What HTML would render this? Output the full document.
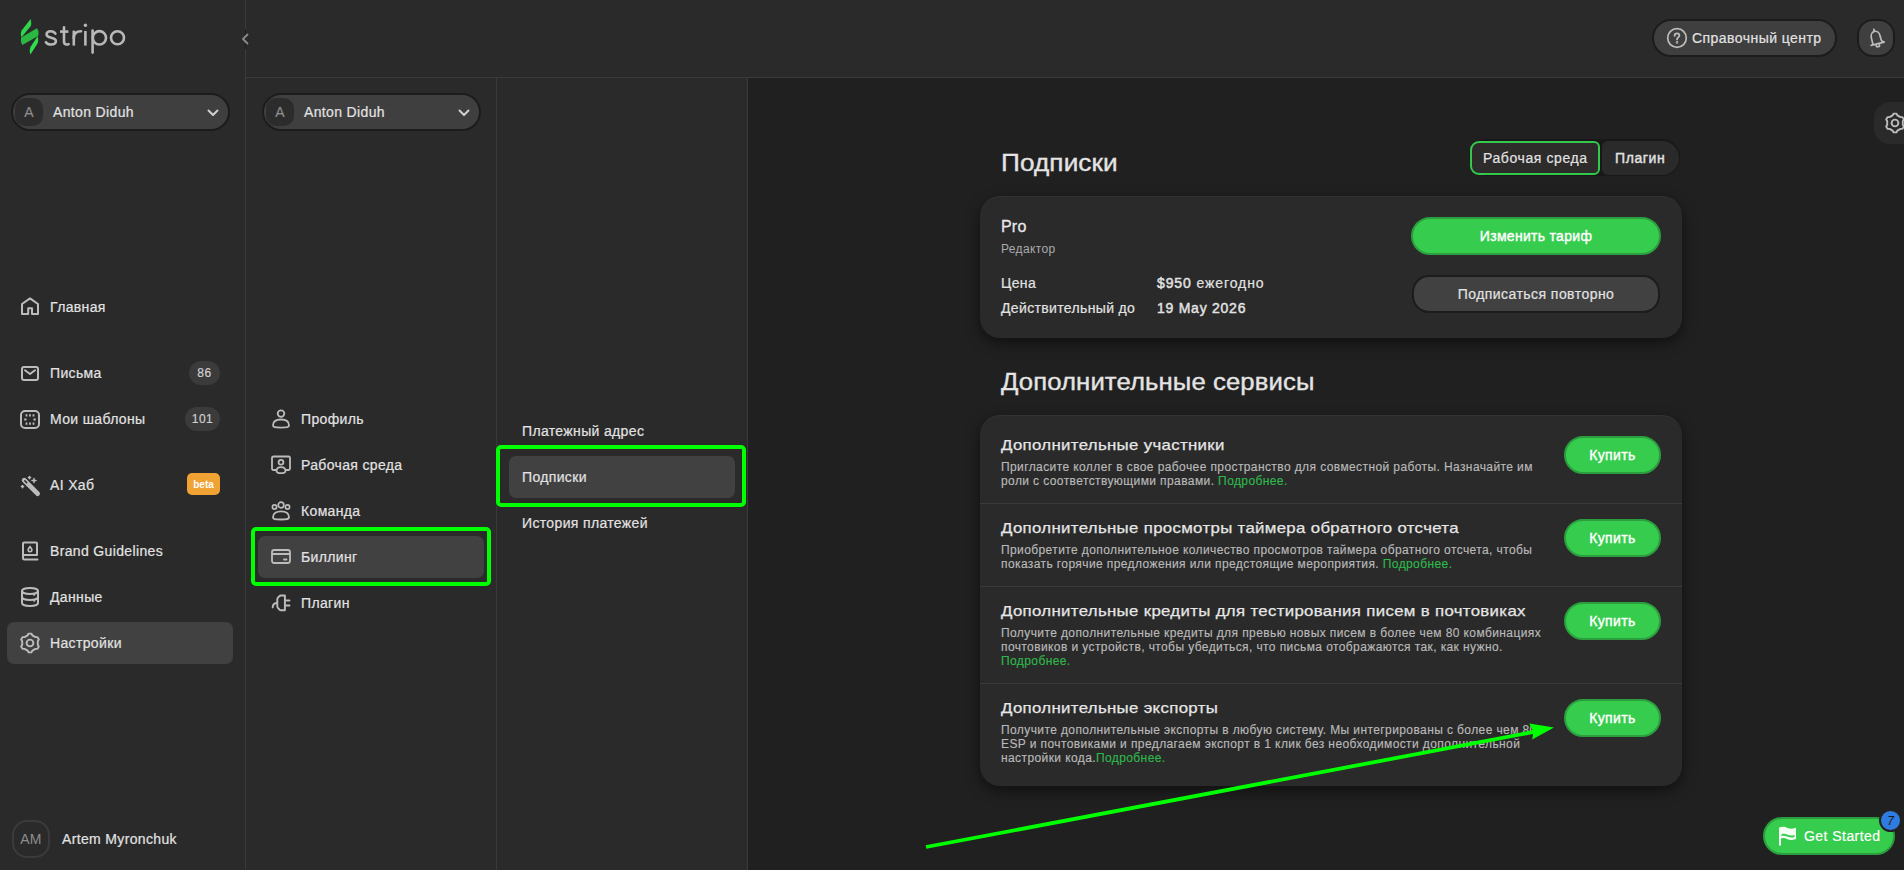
<!DOCTYPE html>
<html><head><meta charset="utf-8">
<style>
*{box-sizing:border-box;margin:0;padding:0}
html,body{width:1904px;height:870px;overflow:hidden;background:#202020;font-family:"Liberation Sans",sans-serif;color:#e2e2e2}
.a{position:absolute;white-space:nowrap}
.panel{position:absolute;background:#2a2a2a}
.vl{position:absolute;width:1px;background:#3a3a3a}
.hl{position:absolute;height:1px;background:#3a3a3a}
.t14{font-size:14px;line-height:14px;letter-spacing:0.35px;color:#e2e2e2;-webkit-text-stroke:0.2px #e2e2e2}
.ic{position:absolute;fill:none;stroke:#bcbcbc;stroke-width:2;stroke-linecap:round;stroke-linejoin:round}
.dd{position:absolute;top:93px;width:219px;height:38px;border:2px solid #1c1c1c;border-radius:19px;background:#3f3f3f}
.dd .av{position:absolute;left:2px;top:3px;width:28px;height:28px;border-radius:10px;background:#2c2c2c;color:#8c8c8c;font-size:14px;line-height:29px;text-align:center;-webkit-text-stroke:0.2px #8c8c8c}
.hi{position:absolute;background:#414141;border-radius:7px}
.badge{position:absolute;height:24px;border-radius:12px;background:#3b3b3b;color:#cfcfcf;font-size:12px;line-height:24px;text-align:center;letter-spacing:0.5px;-webkit-text-stroke:0.2px #cfcfcf}
.gbox{position:absolute;border:4px solid #00ff00;border-radius:5px}

.card{position:absolute;left:980px;width:702px;background:#2a2a2a;border-radius:20px;box-shadow:0 5px 14px rgba(0,0,0,0.5), inset 0 1px 0 rgba(255,255,255,0.04)}
.h24{font-size:24px;line-height:24px;letter-spacing:0.1px;color:#e4e4e4;-webkit-text-stroke:0.35px #e4e4e4;transform-origin:0 0}
.it{font-size:15px;line-height:15px;letter-spacing:0.3px;color:#e6e6e6;-webkit-text-stroke:0.25px #e6e6e6;transform:scaleX(1.12);transform-origin:0 0}
.ds{font-size:12px;line-height:14px;letter-spacing:0.4px;color:#b9b9b9;-webkit-text-stroke:0.15px #b9b9b9}
.ds b{font-weight:normal;color:#2eb84b;-webkit-text-stroke:0.15px #2eb84b}
.gbtn{position:absolute;background:#36cc4e;border:2px solid #2b9f3e;border-radius:19px;color:#fff;font-size:14px;text-align:center;letter-spacing:0.4px;-webkit-text-stroke:0.4px #fff}
.buy{left:1564px;width:97px;height:38px;line-height:34px}
.dv{position:absolute;left:980px;width:702px;height:1px;background:#3a3a3a}
</style></head><body>

<!-- left sidebar -->
<div class="panel" style="left:0;top:0;width:245px;height:870px"></div>
<div class="vl" style="left:245px;top:0;height:29px"></div>
<div class="vl" style="left:245px;top:49px;height:821px"></div>
<!-- header -->
<div class="panel" style="left:246px;top:0;width:1658px;height:77px"></div>
<div class="hl" style="left:246px;top:77px;width:1658px"></div>
<!-- col2/col3 -->
<div class="panel" style="left:246px;top:78px;width:250px;height:792px"></div>
<div class="vl" style="left:496px;top:78px;height:792px"></div>
<div class="panel" style="left:497px;top:78px;width:250px;height:792px"></div>
<div class="vl" style="left:747px;top:78px;height:792px"></div>


<!-- logo -->
<svg class="a" style="left:0;top:0" width="140" height="60" viewBox="0 0 140 60">
 <path d="M30.6,19 C31.4,21.5 31.4,24.5 30.8,26 L21.6,37.3 C20.6,35 20.6,32.5 21.6,30.6 Z" fill="#2fd64b"/>
 <path d="M21.2,37.4 L36.8,28.2 C38.6,29.6 39,33.2 38.1,36 L22.4,45 C20.9,43.2 20.6,40 21.2,37.4 Z" fill="#2ab843"/>
 <path d="M37.6,36.2 C38.6,39.5 38.3,42 37.2,44 L30.4,54.6 C29.4,52 29.6,48.5 30.8,46.4 Z" fill="#31df4e"/>
 <g fill="none" stroke="#b8b8b8" stroke-width="2.6" stroke-linecap="round">
  <path d="M55.4,33.6 C54.4,31.9 52.7,31.2 50.7,31.2 C48.1,31.2 46.6,32.6 46.6,34.5 C46.6,38.9 55.9,36.4 55.9,41 C55.9,43.2 53.8,44.5 51,44.5 C48.7,44.5 46.9,43.6 45.9,42.2"/>
  <path d="M64,27.4 V41.3 C64,43.4 65,44.5 66.8,44.5 C67.4,44.5 68,44.4 68.6,44.1" />
  <path d="M60,31.6 H68.4" stroke-linecap="butt"/>
  <path d="M73.8,30.6 V45.6" stroke-linecap="butt"/>
  <path d="M73.8,38 C73.8,33.2 76.4,31.2 81,31.2" />
  <path d="M85.4,31 V45.6" stroke-linecap="butt"/>
  <path d="M92.6,30.6 V52.6"/>
  <ellipse cx="99.4" cy="37.8" rx="6.6" ry="6.7"/>
  <circle cx="117.5" cy="37.8" r="6.5"/>
 </g>
 <circle cx="85.4" cy="25.3" r="1.7" fill="#b8b8b8"/>
</svg>
<!-- collapse chevron -->
<svg class="a" style="left:238px;top:30px" width="14" height="18" viewBox="0 0 14 18"><path d="M9.5,4.5 L5,9 L9.5,13.5" fill="none" stroke="#8a8a8a" stroke-width="1.8" stroke-linecap="round" stroke-linejoin="round"/></svg>

<!-- dropdown 1 -->
<div class="dd" style="left:11px"><div class="av">A</div></div>
<div class="a t14" style="left:53px;top:105px">Anton Diduh</div>
<svg class="a" style="left:200px;top:105px" width="24" height="16" viewBox="0 0 24 16"><path d="M8.5,5.5 L13,10 L17.5,5.5" fill="none" stroke="#cfcfcf" stroke-width="2" stroke-linecap="round" stroke-linejoin="round"/></svg>

<!-- nav -->
<div class="a t14" style="left:50px;top:300px">Главная</div>
<div class="a t14" style="left:50px;top:366px">Письма</div>
<div class="badge" style="left:189px;top:361px;width:31px">86</div>
<div class="a t14" style="left:50px;top:412px">Мои шаблоны</div>
<div class="badge" style="left:185px;top:407px;width:35px">101</div>
<div class="a t14" style="left:50px;top:478px">AI Хаб</div>
<div class="a" style="left:187px;top:473px;width:33px;height:22px;border-radius:5px;background:#f0a233;color:#fff;font-size:10px;font-weight:bold;line-height:23px;text-align:center">beta</div>
<div class="a t14" style="left:50px;top:544px">Brand Guidelines</div>
<div class="a t14" style="left:50px;top:590px">Данные</div>
<div class="hi" style="left:7px;top:622px;width:226px;height:42px"></div>
<div class="a t14" style="left:50px;top:636px">Настройки</div>

<!-- icons left -->
<svg class="ic" style="left:18px;top:295px" width="24" height="24" viewBox="0 0 24 24"><path d="M4,18.9 V9 L12,3.4 L20,9 V18.9 H14 V13.3 H10.2 V18.9 Z" stroke-width="2"/></svg>
<svg class="ic" style="left:18px;top:362px" width="24" height="24" viewBox="0 0 24 24"><rect x="4" y="5" width="16" height="13" rx="2"/><path d="M7,8.3 L12,12 L17,8.3"/></svg>
<svg class="ic" style="left:18px;top:407px" width="24" height="24" viewBox="0 0 24 24"><rect x="3" y="4" width="18" height="17" rx="4"/><g stroke-width="2.3" stroke-linecap="butt"><path d="M7.6,8.3h1.8M11.1,8.3h1.8M14.6,8.3h1.8M7.6,16.7h1.8M11.1,16.7h1.8M14.6,16.7h1.8M7.4,11.6v1.8M16.6,11.6v1.8"/></g></svg>
<svg class="ic" style="left:18px;top:473px" width="24" height="24" viewBox="0 0 24 24"><path d="M6.2,7.2 L19.6,20.6" stroke-width="4.8"/><path d="M6.8,7.8 L8.6,9.6" stroke="#2a2a2a" stroke-width="1.5"/><path d="M11.5,3.5 v2.2 M10.4,4.6 h2.2 M16,5.5 v4 M14,7.5 h4 M4.5,12.5 v2.2 M3.4,13.6 h2.2" stroke-width="1.5"/></svg>
<svg class="ic" style="left:18px;top:539px" width="24" height="24" viewBox="0 0 24 24"><path d="M5,19 V4.5 Q5,3.5 6,3.5 H18 Q19,3.5 19,4.5 V16 H6.5 Q5,16 5,17.5 V19 Q5,20.5 6.5,20.5 H19.5"/><path d="M12,7.5 L13.8,10.2 Q14.3,12.6 12,12.6 Q9.7,12.6 10.2,10.2 Z" stroke-width="1.6"/></svg>
<svg class="ic" style="left:18px;top:585px" width="24" height="24" viewBox="0 0 24 24"><ellipse cx="12" cy="6" rx="8" ry="3"/><path d="M4,6 V18 C4,19.7 7.6,21 12,21 C16.4,21 20,19.7 20,18 V6"/><path d="M4,12 C4,13.7 7.6,15 12,15 C16.4,15 20,13.7 20,12"/><path d="M16,9.8h.5M16,15.8h.5" stroke-width="1.8"/></svg>
<svg class="ic" style="left:18px;top:631px" width="24" height="24" viewBox="0 0 24 24"><path d="M9.66,4.35 L10.68,2.59 L13.32,2.59 L14.34,4.35 L17.46,6.15 L19.49,6.15 L20.81,8.44 L19.79,10.20 L19.79,13.80 L20.81,15.56 L19.49,17.85 L17.46,17.85 L14.34,19.65 L13.32,21.41 L10.68,21.41 L9.66,19.65 L6.54,17.85 L4.51,17.85 L3.19,15.56 L4.21,13.80 L4.21,10.20 L3.19,8.44 L4.51,6.15 L6.54,6.15 Z" stroke-width="1.9"/><circle cx="12" cy="12" r="3.4" stroke-width="1.9"/></svg>

<!-- bottom user -->
<div class="a" style="left:12px;top:820px;width:38px;height:38px;border:2px solid #3b3b3b;border-radius:15px;color:#8d8d8d;font-size:14px;line-height:34px;text-align:center;letter-spacing:0.2px">AM</div>
<div class="a t14" style="left:62px;top:832px">Artem Myronchuk</div>


<!-- dropdown 2 -->
<div class="dd" style="left:262px"><div class="av">A</div></div>
<div class="a t14" style="left:304px;top:105px">Anton Diduh</div>
<svg class="a" style="left:451px;top:105px" width="24" height="16" viewBox="0 0 24 16"><path d="M8.5,5.5 L13,10 L17.5,5.5" fill="none" stroke="#cfcfcf" stroke-width="2" stroke-linecap="round" stroke-linejoin="round"/></svg>

<!-- col2 nav -->
<div class="hi" style="left:258px;top:536px;width:226px;height:42px"></div>
<div class="gbox" style="left:251px;top:527px;width:240px;height:59px"></div>
<div class="a t14" style="left:301px;top:412px">Профиль</div>
<div class="a t14" style="left:301px;top:458px">Рабочая среда</div>
<div class="a t14" style="left:301px;top:504px">Команда</div>
<div class="a t14" style="left:301px;top:550px">Биллинг</div>
<div class="a t14" style="left:301px;top:596px">Плагин</div>
<svg class="ic" style="left:270px;top:408px" width="22" height="22" viewBox="0 0 22 22"><circle cx="11" cy="5.6" r="3.3" stroke-width="1.8"/><path d="M3,17.5 C3,13.5 6.5,11.5 11,11.5 C15.5,11.5 19,13.5 19,17.5 C19,19.2 17.5,19.6 11,19.6 C4.5,19.6 3,19.2 3,17.5 Z" stroke-width="1.8"/></svg>
<svg class="ic" style="left:270px;top:454px" width="22" height="22" viewBox="0 0 22 22"><path d="M6,16 H3.5 Q2,16 2,14.5 V4 Q2,2.5 3.5,2.5 H18.5 Q20,2.5 20,4 V14.5 Q20,16 18.5,16 H16" stroke-width="1.8"/><circle cx="11" cy="8.2" r="2.4" stroke-width="1.8"/><path d="M6.5,17 C6.5,14.5 8.5,13.2 11,13.2 C13.5,13.2 15.5,14.5 15.5,17 C15.5,18.6 14.5,19.2 11,19.2 C7.5,19.2 6.5,18.6 6.5,17 Z" stroke-width="1.8"/></svg>
<svg class="ic" style="left:270px;top:500px" width="22" height="22" viewBox="0 0 22 22"><circle cx="11" cy="5" r="2.8" stroke-width="1.7"/><circle cx="4.5" cy="7" r="2.1" stroke-width="1.7"/><circle cx="17.5" cy="7" r="2.1" stroke-width="1.7"/><path d="M3,17.3 C3,13.2 6.5,11.3 11,11.3 C15.5,11.3 19,13.2 19,17.3 C19,19 17.5,19.5 11,19.5 C4.5,19.5 3,19 3,17.3 Z" stroke-width="1.8"/></svg>
<svg class="ic" style="left:270px;top:546px" width="22" height="22" viewBox="0 0 22 22"><rect x="2" y="4" width="18" height="13" rx="2.2" stroke-width="1.8"/><path d="M2.5,8 H19.5" stroke-width="1.8"/><path d="M14,13.5 H16.5" stroke-width="1.8"/></svg>
<svg class="ic" style="left:270px;top:592px" width="22" height="22" viewBox="0 0 22 22"><path d="M14.9,3.5 H11 C10.2,3.5 9.6,3.9 9.1,4.4 L7.8,5.9 C7.4,6.4 7.3,7 7.3,7.6 V14.3 C7.3,14.9 7.5,15.5 7.9,15.9 L9.4,17.5 C9.8,17.9 10.4,18.3 11,18.3 H14.9 Z" stroke-width="1.9"/><path d="M15.7,8.5 H19.5 M15.7,13.5 H19.5" stroke-width="1.9"/><path d="M7,10.8 C4.8,11.2 2.7,13 2.7,15.4" stroke-width="1.9"/></svg>

<!-- col3 nav -->
<div class="a t14" style="left:522px;top:424px">Платежный адрес</div>
<div class="hi" style="left:509px;top:456px;width:226px;height:42px"></div>
<div class="gbox" style="left:496px;top:445px;width:250px;height:62px"></div>
<div class="a t14" style="left:522px;top:470px">Подписки</div>
<div class="a t14" style="left:522px;top:516px">История платежей</div>

<!-- header -->
<div class="a" style="left:1652px;top:19px;width:185px;height:38px;border:2px solid #1c1c1c;border-radius:19px;background:#3f3f3f"></div>
<svg class="ic" style="left:1665px;top:26px" width="24" height="24" viewBox="0 0 24 24"><circle cx="12" cy="12" r="9.3" stroke-width="1.7"/><path d="M9.6,9.8 C9.6,8.3 10.7,7.3 12,7.3 C13.4,7.3 14.4,8.3 14.4,9.6 C14.4,11.3 12,11.5 12,13.4" stroke-width="1.8"/><circle cx="12" cy="16.4" r="0.4" stroke-width="1.8"/></svg>
<div class="a t14" style="left:1692px;top:31px;letter-spacing:0.45px">Справочный центр</div>
<div class="a" style="left:1857px;top:19px;width:38px;height:38px;border:2px solid #1c1c1c;border-radius:16px;background:#3f3f3f"></div>
<svg class="ic" style="left:1865px;top:26px;transform:rotate(-14deg)" width="22" height="24" viewBox="0 0 22 24"><path d="M6.5,18 V11 C6.5,7.6 8.6,5.2 11,5.2 C13.4,5.2 15.5,7.6 15.5,11 V15 C15.5,16.5 16.5,17.3 18,18 Z M6.5,18 H4.5" stroke-width="1.7"/><path d="M11,3 V5" stroke-width="1.7"/><path d="M9.3,19.5 C9.3,21.5 12.7,21.5 12.7,19.5" stroke-width="1.7"/></svg>


<!-- floating gear -->
<div class="a" style="left:1874px;top:102px;width:50px;height:42px;border-radius:16px;background:#2a2a2a"></div>
<svg class="ic" style="left:1883px;top:111px" width="24" height="24" viewBox="0 0 24 24"><path d="M9.66,4.35 L10.68,2.59 L13.32,2.59 L14.34,4.35 L17.46,6.15 L19.49,6.15 L20.81,8.44 L19.79,10.20 L19.79,13.80 L20.81,15.56 L19.49,17.85 L17.46,17.85 L14.34,19.65 L13.32,21.41 L10.68,21.41 L9.66,19.65 L6.54,17.85 L4.51,17.85 L3.19,15.56 L4.21,13.80 L4.21,10.20 L3.19,8.44 L4.51,6.15 L6.54,6.15 Z" stroke-width="1.9"/><circle cx="12" cy="12" r="3.4" stroke-width="1.9"/></svg>

<!-- subscriptions -->
<div class="a h24" style="left:1001px;top:151px;transform:scaleX(1.09)">Подписки</div>
<div class="a" style="left:1469px;top:139px;width:211px;height:37px;border-radius:18px;background:#181818"></div>
<div class="a" style="left:1602px;top:141px;width:77px;height:34px;border-radius:6px 17px 17px 6px;background:#2a2a2a"></div>
<div class="a" style="left:1470px;top:141px;width:130px;height:34px;border:2px solid #33c94c;border-radius:9px 6px 6px 9px;background:#2e2b2b"></div>
<div class="a t14" style="left:1483px;top:151px;letter-spacing:0.6px">Рабочая среда</div>
<div class="a t14" style="left:1615px;top:151px;letter-spacing:0.6px;-webkit-text-stroke:0.4px #e2e2e2">Плагин</div>

<div class="card" style="top:196px;height:142px"></div>
<div class="a" style="left:1001px;top:219px;font-size:16px;line-height:16px;letter-spacing:0.2px;color:#e8e8e8;-webkit-text-stroke:0.3px #e8e8e8">Pro</div>
<div class="a" style="left:1001px;top:243px;font-size:12px;line-height:12px;letter-spacing:0.35px;color:#ababab">Редактор</div>
<div class="a t14" style="left:1001px;top:276px">Цена</div>
<div class="a t14" style="left:1157px;top:276px;letter-spacing:0.9px"><span style="-webkit-text-stroke:0.45px #e2e2e2">$950</span> ежегодно</div>
<div class="a t14" style="left:1001px;top:301px">Действительный до</div>
<div class="a t14" style="left:1157px;top:301px;letter-spacing:0.75px;-webkit-text-stroke:0.45px #e2e2e2">19 May 2026</div>
<div class="gbtn" style="left:1411px;top:217px;width:250px;height:38px;line-height:35px;letter-spacing:0.3px">Изменить тариф</div>
<div class="a" style="left:1412px;top:275px;width:248px;height:38px;border:2px solid #1c1c1c;border-radius:17px;background:#414141;color:#e2e2e2;font-size:14px;line-height:35px;text-align:center;letter-spacing:0.45px;-webkit-text-stroke:0.2px #e2e2e2">Подписаться повторно</div>

<!-- services -->
<div class="a h24" style="left:1001px;top:370px;transform:scaleX(1.07)">Дополнительные сервисы</div>
<div class="card" style="top:415px;height:371px"></div>
<div class="dv" style="top:503px"></div>
<div class="dv" style="top:586px"></div>
<div class="dv" style="top:683px"></div>

<div class="a it" style="left:1001px;top:437px">Дополнительные участники</div>
<div class="a ds" style="left:1001px;top:460px">Пригласите коллег в свое рабочее пространство для совместной работы. Назначайте им<br>роли с соответствующими правами. <b>Подробнее.</b></div>
<div class="gbtn buy" style="top:436px">Купить</div>

<div class="a it" style="left:1001px;top:520px">Дополнительные просмотры таймера обратного отсчета</div>
<div class="a ds" style="left:1001px;top:543px">Приобретите дополнительное количество просмотров таймера обратного отсчета, чтобы<br>показать горячие предложения или предстоящие мероприятия. <b>Подробнее.</b></div>
<div class="gbtn buy" style="top:519px">Купить</div>

<div class="a it" style="left:1001px;top:603px">Дополнительные кредиты для тестирования писем в почтовиках</div>
<div class="a ds" style="left:1001px;top:626px">Получите дополнительные кредиты для превью новых писем в более чем 80 комбинациях<br>почтовиков и устройств, чтобы убедиться, что письма отображаются так, как нужно.<br><b>Подробнее.</b></div>
<div class="gbtn buy" style="top:602px">Купить</div>

<div class="a it" style="left:1001px;top:700px">Дополнительные экспорты</div>
<div class="a ds" style="left:1001px;top:723px">Получите дополнительные экспорты в любую систему. Мы интегрированы с более чем 80<br>ESP и почтовиками и предлагаем экспорт в 1 клик без необходимости дополнительной<br>настройки кода.<b>Подробнее.</b></div>
<div class="gbtn buy" style="top:699px">Купить</div>

<!-- get started -->
<div class="a" style="left:1763px;top:817px;width:132px;height:38px;border:2px solid #2b9f3e;border-radius:19px;background:#36cc4e"></div>
<svg class="a" style="left:1776px;top:825px" width="24" height="24" viewBox="0 0 24 24"><path d="M4,2.5 V20.5" stroke="#f4fff4" stroke-width="2" fill="none"/><path d="M4,2.5 C7,1.2 9,2 11.5,3 C14,4 16.5,4 20,2.8 V14 C16.5,15.2 14,15.2 11.5,14.2 C9,13.2 7,12.5 4,13.8 Z" fill="#f4fff4"/><path d="M5.5,9.3 C8,8.3 9.5,9.1 11.5,9.8 C14,10.7 16,10.7 18.5,9.9 V11.9 C16,12.7 14,12.7 11.5,11.8 C9.5,11.1 8,10.3 5.5,11.3 Z" fill="#36cc4e"/></svg>
<div class="a" style="left:1804px;top:829px;font-size:14px;line-height:14px;color:#fff;letter-spacing:0.45px;-webkit-text-stroke:0.2px #fff">Get Started</div>
<div class="a" style="left:1879px;top:809px;width:23px;height:23px;border:2px solid #222;border-radius:50%;background:#2f7be0;color:#1a1a1a;font-size:12px;line-height:20px;text-align:center;font-style:italic">7</div>

<!-- annotation arrow -->
<svg class="a" style="left:0;top:0" width="1904" height="870" viewBox="0 0 1904 870">
 <path d="M926,847 L1535,731.7" stroke="#00ff00" stroke-width="3.8" fill="none"/>
 <path d="M1554,727.4 L1529.3,723.4 L1533.5,732 L1532.2,739.6 Z" fill="#00ff00"/>
</svg>

</body></html>
